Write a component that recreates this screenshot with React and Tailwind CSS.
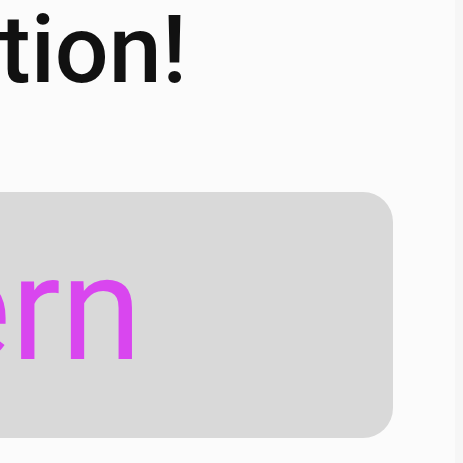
export default function App() {
  return (
    <div className="w-[463px] h-[463px] overflow-hidden bg-[#fbfbfb] relative" style={{ fontFamily: 'Roboto, sans-serif' }}>
      <div className="h-[463px] flex flex-col">
        <div className="ml-[-1px] mt-[2px] text-[95px] font-medium leading-none text-[#111] whitespace-nowrap">tion!</div>
        <div className="mt-[95px] ml-[-40px] w-[433px] h-[246px] rounded-[30px] bg-[#d9d9d9] flex items-start overflow-hidden">
          <span className="ml-[-27px] mt-[44px] text-[147px] leading-none text-[#d946ef] whitespace-nowrap">ern</span>
        </div>
      </div>
      <div className="absolute right-0 top-0 w-[8px] h-full bg-[#f6f6f6]" />
    </div>
  );
}
